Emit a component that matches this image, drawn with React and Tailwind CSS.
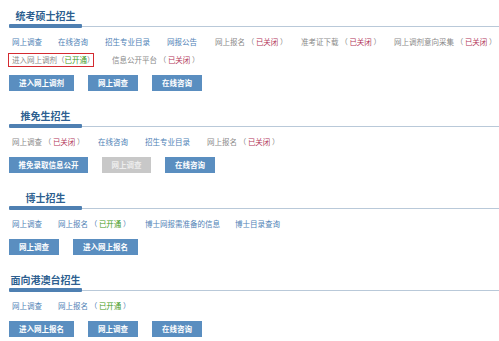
import React from 'react'

const FONT = { fontFamily: '"Noto Sans CJK SC", "Noto Sans", sans-serif' }

const sections = [
  {
    title: '统考硕士招生',
    rows: [
      [
        { text: '网上调查', w: 'w-[46px]' },
        { text: '在线咨询', w: 'w-[47px]' },
        { text: '招生专业目录', w: 'w-[62px]' },
        { text: '网报公告', w: 'w-[48px]' },
        { text: '网上报名', w: 'w-[86px]', grey: true, status: 'closed' },
        { text: '准考证下载', w: 'w-[93px]', grey: true, status: 'closed' },
        { text: '网上调剂意向采集', grey: true, status: 'closed' },
      ],
      [
        { text: '进入网上调剂', boxed: true, grey: true, status: 'open' },
        { text: '信息公开平台', grey: true, status: 'closed' },
      ],
    ],
    buttons: [
      { label: '进入网上调剂', w: 'w-[65px]' },
      { label: '网上调查', w: 'w-[50px]' },
      { label: '在线咨询', w: 'w-[50px]' },
    ],
  },
  {
    title: '推免生招生',
    rows: [
      [
        { text: '网上调查', w: 'w-[86px]', grey: true, status: 'closed' },
        { text: '在线咨询', w: 'w-[47px]' },
        { text: '招生专业目录', w: 'w-[62px]' },
        { text: '网上报名', grey: true, status: 'closed' },
      ],
    ],
    buttons: [
      { label: '推免录取信息公开', w: 'w-[79px]' },
      { label: '网上调查', w: 'w-[49px]', disabled: true },
      { label: '在线咨询', w: 'w-[50px]' },
    ],
  },
  {
    title: '博士招生',
    rows: [
      [
        { text: '网上调查', w: 'w-[46px]' },
        { text: '网上报名', w: 'w-[87px]', status: 'open' },
        { text: '博士网报需准备的信息', w: 'w-[90px]' },
        { text: '博士目录查询' },
      ],
    ],
    buttons: [
      { label: '网上调查', w: 'w-[50px]' },
      { label: '进入网上报名', w: 'w-[65px]' },
    ],
  },
  {
    title: '面向港澳台招生',
    rows: [
      [
        { text: '网上调查', w: 'w-[46px]' },
        { text: '网上报名', status: 'open' },
      ],
    ],
    buttons: [
      { label: '进入网上报名', w: 'w-[65px]' },
      { label: '网上调查', w: 'w-[50px]' },
      { label: '在线咨询', w: 'w-[50px]' },
    ],
  },
]

const LinkItem = ({ item }) => {
  const tone = item.grey ? 'text-[#8a8a8a]' : 'text-[#4f82b6]'
  const tight = item.boxed
  const body = (
    <span className={`whitespace-nowrap ${tone}`}>
      {item.text}
      {item.status && (
        <>
          {tight ? '（' : ' （ '}
          <span className={item.status === 'open' ? 'text-[#3f9a22]' : 'text-[#b3365a]'}>
            {item.status === 'open' ? '已开通' : '已关闭'}
          </span>
          {tight ? '）' : ' ）'}
        </>
      )}
    </span>
  )

  if (item.boxed) {
    return (
      <div className="w-[86px] h-[14px] mr-[18px] -ml-[4px] border border-[#d42a30] flex items-center pl-[3px]">
        {body}
      </div>
    )
  }

  return <div className={`${item.w || ''} shrink-0`}>{body}</div>
}

const Section = ({ data, first }) => (
  <div className={first ? 'pt-[9px]' : 'mt-[18px]'}>
    <div className="pl-[9px]">
      <div className="w-[73px] text-center font-bold text-[10px] leading-[14px] text-[#2e5f90] whitespace-nowrap">
        {data.title}
      </div>
    </div>
    <div className="mt-[1px] flex items-end h-[4px]">
      <div className="ml-[9px] w-[73px] h-[4px] bg-[#4f80b2] rounded-[1px]"></div>
      <div className="flex-1 h-px mb-[1px] bg-[#b9c9d9]"></div>
    </div>

    <div className="mt-[6px] flex flex-col gap-[2px]">
      {data.rows.map((row, i) => (
        <div key={i} className="flex items-center pl-[12px] text-[7.5px] leading-[16px]">
          {row.map((item, j) => (
            <LinkItem key={j} item={item} />
          ))}
        </div>
      ))}
    </div>

    <div className="mt-[7px] flex gap-[14px] pl-[9px]">
      {data.buttons.map((b, i) => (
        <button
          key={i}
          className={`${b.w} h-[16px] flex items-center justify-center text-[7.5px] font-bold whitespace-nowrap ${
            b.disabled ? 'bg-[#c8c8c8] text-[#ededed]' : 'bg-[#5a8ec0] text-white'
          }`}
        >
          {b.label}
        </button>
      ))}
    </div>
  </div>
)

const App = () => {
  return (
    <div className="w-[499px] h-[341px] bg-white overflow-hidden" style={FONT}>
      {sections.map((s, i) => (
        <Section key={i} data={s} first={i === 0} />
      ))}
    </div>
  )
}

export default App
